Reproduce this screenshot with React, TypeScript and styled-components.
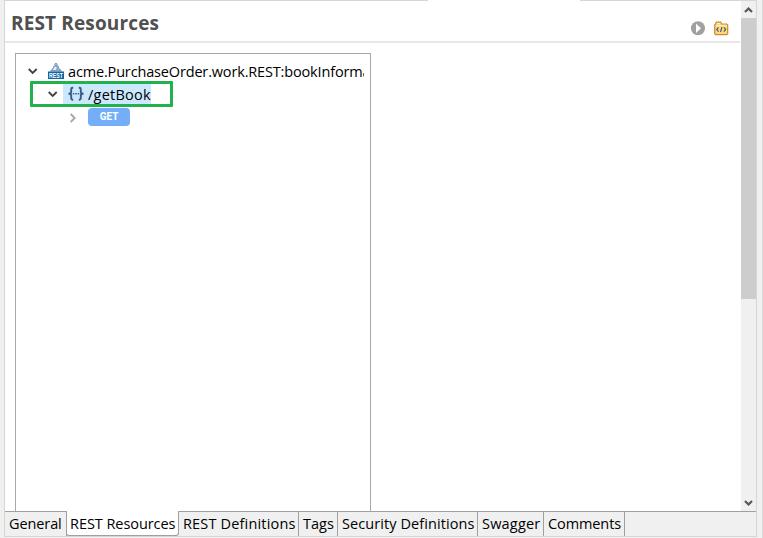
import React from "react";
import styled, { createGlobalStyle } from "styled-components";

const Global = createGlobalStyle`
  * { box-sizing: border-box; }
  body { margin: 0; overflow: hidden; background: #f0f0f0; }
`;

const Workbench = styled.div`
  width: 763px;
  height: 538px;
  padding: 0 5px 1px 4px;
  background: #f0f0f0;
  border-right: 1px solid #d9d9d9;
  font-family: "Open Sans", "Noto Sans", sans-serif;
  color: #000;
`;

const Editor = styled.div`
  position: relative;
  display: flex;
  flex-direction: column;
  width: 753px;
  height: 537px;
  border: 1px solid #d6d6d6;
`;

const TopGap = styled.div`
  position: absolute;
  left: 423px;
  top: -1px;
  width: 152px;
  height: 1px;
  background: #fff;
`;

const Body = styled.div`
  display: flex;
  height: 510px;
`;

const Page = styled.main`
  display: flex;
  flex-direction: column;
  width: 736px;
  background: #fff;
`;

const Header = styled.header`
  display: flex;
  align-items: center;
  justify-content: space-between;
  flex: none;
  width: 735px;
  height: 42px;
  padding: 4px 11px 0 6px;
  border-bottom: 2px solid #e8e8e8;
`;

const Title = styled.h1`
  margin: 0;
  font-size: 19px;
  line-height: 26px;
  font-weight: 700;
  letter-spacing: 0.14px;
  color: #505050;
  white-space: nowrap;
`;

const Tools = styled.div`
  display: flex;
  gap: 8px;
  padding-top: 11px;
  svg { display: block; }
`;

const Tree = styled.div`
  flex: 1;
  width: 356px;
  margin: 10px 0 0 10px;
  padding: 6px 6px 0 0;
  border: 1px solid #a7a7ab;
  border-bottom: 0;
  overflow: hidden;
`;

const Row = styled.div<{ $indent: number; $h?: number }>`
  display: flex;
  align-items: center;
  height: ${(p) => p.$h ?? 22}px;
  padding-left: ${(p) => p.$indent}px;
  overflow: hidden;
  svg { flex: none; display: block; }
`;

const Callout = styled.div`
  width: 143px;
  height: 26px;
  margin: -1px 0 0 14px;
  border: 3px solid #22b14c;
  border-radius: 1px;
`;

const Selected = styled.div`
  display: flex;
  align-items: center;
  width: 88px;
  height: 20px;
  margin-left: 5px;
  padding-left: 5px;
  background: #cce8ff;
`;

const NodeText = styled.span<{ $track: number }>`
  margin: 2px 0 0 4px;
  font-size: 14.5px;
  line-height: 20px;
  letter-spacing: ${(p) => p.$track}px;
  white-space: nowrap;
`;

const NodeIcon = styled.span`
  flex: none;
  margin-left: 10px;
`;

const Verb = styled.span`
  width: 42px;
  height: 18px;
  margin: -2px 0 0 10px;
  border-radius: 4px;
  background: #74aef8;
  color: #fff;
  font: 700 10px/18px Roboto, "Liberation Sans", sans-serif;
  text-align: center;
`;

const Scrollbar = styled.div`
  display: flex;
  flex-direction: column;
  justify-content: space-between;
  width: 15px;
  background: #f0f0f0;
  svg { display: block; }
`;

const Thumb = styled.div`
  height: 281px;
  margin-bottom: auto;
  background: #cdcdcd;
`;

const Tabs = styled.nav`
  display: flex;
  height: 25px;
  border-top: 1px solid #a0a0a0;
`;

const Tab = styled.div<{ $w: number; $track: number; $active?: boolean }>`
  width: ${(p) => p.$w}px;
  height: ${(p) => (p.$active ? 25 : 24)}px;
  margin-top: ${(p) => (p.$active ? -1 : 0)}px;
  padding: ${(p) => (p.$active ? "1px 0 0 3px" : "0 0 0 4px")};
  border: 0 solid #a0a0a0;
  border-right-width: 1px;
  border-bottom-width: ${(p) => (p.$active ? 1 : 0)}px;
  border-radius: ${(p) => (p.$active ? "0 0 3px 3px" : "0")};
  ${(p) => p.$active && "border-left-width: 1px; margin-left: -1px;"}
  background: ${(p) => (p.$active ? "#fff" : "#f0f0f0")};
  font-size: 14.5px;
  line-height: 23px;
  letter-spacing: ${(p) => p.$track}px;
  white-space: nowrap;
`;

const Chevron = ({ open }: { open?: boolean }) => (
  <svg width="10" height="10" viewBox="0 0 10 10" fill="none">
    <path
      d={open ? "M.7 3l4 4 4-4" : "M2.700 1l4 4-4 4"}
      stroke={open ? "#404040" : "#a6a6a6"}
      strokeWidth="1.8"
    />
  </svg>
);

const ScrollArrow = ({ down }: { down?: boolean }) => (
  <svg width="15" height="17" viewBox="0 0 15 17" fill="none">
    <path d={down ? "M4 7l3.5 3.5L11 7" : "M4 11l3.5-3.5L11 11"} stroke="#555" strokeWidth="2.2" />
  </svg>
);

const RestIcon = () => (
  <svg width="16" height="16" viewBox="0 0 16 16">
    <circle cx="8" cy="1.6" r="1.2" fill="#b9d0e6" stroke="#5d82ab" strokeWidth=".8" />
    <path d="M2.500 8C3.800 7 5.500 5.400 6 3h4c.5 2.400 2.200 4 3.500 5z" fill="#8fb1d4" stroke="#6689b0" strokeWidth=".9" />
    <path d="M7 3.500h1.500L8 7H5z" fill="#e4eef8" />
    <path d="M0 8.500h16V16H0z" fill="#13649f" />
    <text x="1" y="14.700" textLength="14" lengthAdjust="spacingAndGlyphs" fontFamily="Liberation Sans" fontWeight="700" fontSize="7" fill="#fff">REST</text>
  </svg>
);

const BracesIcon = () => (
  <svg width="16" height="16" viewBox="0 0 16 16" fill="none" stroke="#3b5b84" strokeWidth="1.900">
    <path d="M5.200 1.800H4.600Q3.200 1.800 3.200 3.200v2.800Q3.200 7.700.5 7.700 3.200 7.700 3.200 9.500v2.800q0 1.400 1.400 1.400H5.200M10.800 1.800h.6Q12.800 1.800 12.800 3.200v2.800q0 1.700 2.700 1.700-2.700 0-2.700 1.800v2.800q0 1.400-1.400 1.400H10.800" />
    <path d="M4.800 7.700h1.500M7.250 7.700h1.500M9.700 7.700h1.500" strokeWidth="1.500" />
  </svg>
);

const RunIcon = () => (
  <svg width="15" height="15" viewBox="0 0 15 15">
    <circle cx="7" cy="7.200" r="7" fill="#a0a0a0" />
    <path d="M5 2.400v9.600L10 7.200z" fill="#fff" />
  </svg>
);

const SourceFolderIcon = () => (
  <svg width="15" height="15" viewBox="0 0 15 15" fill="none">
    <path d="M.7 13V4l1-1V2l1-.8h4L7.700 3h5l1 1v9l-1 .7h-11z" fill="#fbd982" stroke="#cd8b30" strokeWidth="1.200" />
    <path d="M2.700 2.500h3.500M2.200 4.700h10.500" stroke="#fff0bd" />
    <path d="M4.500 6.300L2.700 8.500l1.800 2.200M9.900 6.300l1.800 2.200-1.800 2.200M8 6l-1.500 5" stroke="#4e5f70" strokeWidth="1.200" />
  </svg>
);

const tabs = [
  { label: "General", w: 62, track: -0.1 },
  { label: "REST Resources", w: 113, track: -0.06, active: true },
  { label: "REST Definitions", w: 120, track: 0.17 },
  { label: "Tags", w: 39, track: 0 },
  { label: "Security Definitions", w: 140, track: 0.08 },
  { label: "Swagger", w: 66, track: 0.2 },
  { label: "Comments", w: 81, track: -0.1 },
];

export default function App() {
  return (
    <Workbench>
      <Global />
      <Editor>
        <TopGap />
        <Body>
          <Page>
            <Header>
              <Title>REST Resources</Title>
              <Tools>
                <RunIcon />
                <SourceFolderIcon />
              </Tools>
            </Header>
            <Tree>
              <Row $indent={12}>
                <Chevron open />
                <NodeIcon><RestIcon /></NodeIcon>
                <NodeText $track={-0.16}>acme.PurchaseOrder.work.REST:bookInforma</NodeText>
              </Row>
              <Callout>
                <Row $indent={15} $h={20}>
                  <Chevron open />
                  <Selected>
                    <BracesIcon />
                    <NodeText $track={0.25}>/getBook</NodeText>
                  </Selected>
                </Row>
              </Callout>
              <Row $indent={52}>
                <Chevron />
                <Verb>GET</Verb>
              </Row>
            </Tree>
          </Page>
          <Scrollbar>
            <ScrollArrow />
            <Thumb />
            <ScrollArrow down />
          </Scrollbar>
        </Body>
        <Tabs>
          {tabs.map((t) => (
            <Tab key={t.label} $w={t.w} $track={t.track} $active={t.active}>
              {t.label}
            </Tab>
          ))}
        </Tabs>
      </Editor>
    </Workbench>
  );
}
